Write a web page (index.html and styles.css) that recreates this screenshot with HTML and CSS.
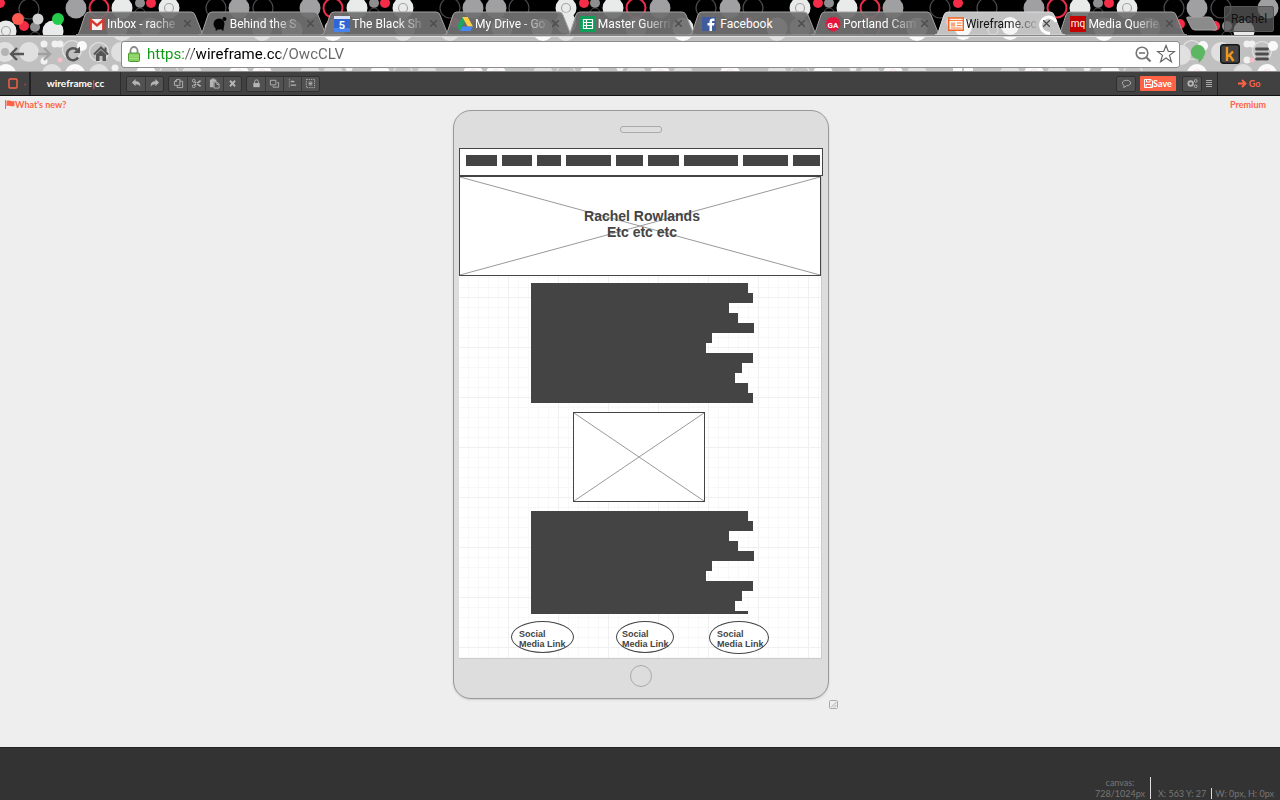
FILE: index.html
```html
<!DOCTYPE html>
<html lang="en">
<head>
<meta charset="utf-8">
<title>Wireframe.cc</title>
<link rel="stylesheet" href="styles.css">
</head>
<body>
<svg width="0" height="0" class="defs" aria-hidden="true">
  <defs>
    <circle id="c-gray" r="10.5" fill="#a0a0a2"/>
    <circle id="c-white" r="10.5" fill="#e9ebea"/>
    <circle id="c-dark" r="10" fill="none" stroke="#4c4c4c" stroke-width="1.2"/>
    <circle id="c-red" r="9.5" fill="none" stroke="#ef2d49" stroke-width="2"/>
    <circle id="c-dot" r="5" fill="#f42c48"/>
    <g id="c-ring"><circle r="10.5" fill="#e9ebea"/><circle r="4.5" fill="none" stroke="#a5a5a5" stroke-width="1.2"/></g>
    <g id="c-pair"><circle cy="-5" r="5" fill="#8e8e90"/><circle cy="5" r="5" fill="none" stroke="#4c4c4c"/></g>
    <circle id="t-light" r="10" fill="#e0e0e0"/>
    <circle id="t-white" r="10" fill="#fafafa"/>
    <circle id="t-line" r="9.5" fill="none" stroke="#e2e2e2" stroke-width="1.2"/>
    <circle id="t-small" r="3.5" fill="#f1f1f1"/>
    <g id="t-ring"><circle r="10" fill="#fafafa"/><circle r="4.5" fill="none" stroke="#f6dfe3"/></g>
    <path id="tab" d="M0 24 C3 24 3 21 4 19 L9 4 Q10 1 13 1 H115 Q118 1 119 4 L125 19 C126 22 127 24 130 24 Z"/>
    <path id="x" d="M0 0 7 7M7 0 0 7" stroke="#4b4b4b" stroke-width="1.3" fill="none"/>
  </defs>
</svg>

<header class="browser">
  <div class="tabstrip">
    <svg class="theme" height="36" aria-hidden="true">
      <use href="#c-dot" x="0" y="3"/><use href="#c-dark" x="29" y="9"/><use href="#c-gray" x="76" y="8"/><use href="#c-red" x="99" y="8"/><use href="#c-white" x="122" y="8"/><use href="#c-pair" x="140" y="8"/><use href="#c-dot" x="151" y="3"/><use href="#c-ring" x="169" y="8"/>
      <use href="#c-dark" x="216" y="8"/><use href="#c-gray" x="239" y="8"/><use href="#c-dark" x="263" y="8"/><use href="#c-gray" x="310" y="8"/><use href="#c-red" x="333" y="8"/><use href="#c-white" x="357" y="8"/><use href="#c-pair" x="374" y="8"/><use href="#c-dot" x="385" y="3"/><use href="#c-ring" x="403" y="8"/>
      <use href="#c-dark" x="450" y="8"/><use href="#c-gray" x="473" y="8"/><use href="#c-gray" x="496" y="8"/><use href="#c-dark" x="519" y="8"/><use href="#c-ring" x="566" y="8"/><use href="#c-dot" x="584" y="3"/><use href="#c-pair" x="595" y="8"/><use href="#c-white" x="613" y="8"/><use href="#c-red" x="636" y="8"/><use href="#c-gray" x="660" y="8"/>
      <use href="#c-dark" x="706" y="8"/><use href="#c-gray" x="730" y="8"/><use href="#c-dark" x="753" y="8"/><use href="#c-ring" x="800" y="8"/><use href="#c-dot" x="818" y="3"/><use href="#c-pair" x="829" y="8"/><use href="#c-white" x="847" y="8"/><use href="#c-red" x="870" y="8"/><use href="#c-gray" x="893" y="8"/>
      <use href="#c-dark" x="940" y="8"/><use href="#c-dot" x="958" y="3"/><use href="#c-dark" x="987" y="8"/><use href="#c-gray" x="1034" y="8"/><use href="#c-red" x="1057" y="8"/><use href="#c-white" x="1080" y="8"/><use href="#c-pair" x="1098" y="8"/><use href="#c-dot" x="1109" y="3"/><use href="#c-ring" x="1127" y="8"/>
      <use href="#c-dark" x="1174" y="8"/><use href="#c-gray" x="1197" y="8"/><use href="#c-dark" x="1221" y="8"/><use href="#c-gray" x="1268" y="8"/>
      <use href="#c-ring" x="6" y="31"/><use href="#c-white" x="53" y="31"/><use href="#c-pair" x="35" y="32"/><use href="#c-dot" x="24" y="26"/>
      <use href="#c-white" x="117" y="29"/><use href="#c-gray" x="150" y="28"/><use href="#c-gray" x="262" y="28"/><use href="#c-ring" x="292" y="30"/><use href="#c-white" x="335" y="29"/><use href="#c-gray" x="405" y="28"/><use href="#c-dot" x="455" y="23"/><use href="#c-ring" x="502" y="28"/><use href="#c-white" x="542" y="29"/><use href="#c-white" x="566" y="23"/><use href="#c-gray" x="636" y="28"/><use href="#c-white" x="683" y="28"/><use href="#c-dot" x="748" y="22"/><use href="#c-white" x="777" y="28"/><use href="#c-gray" x="800" y="28"/><use href="#c-red" x="870" y="28"/><use href="#c-white" x="917" y="28"/><use href="#c-white" x="1104" y="28"/><use href="#c-gray" x="1150" y="28"/>
      <use href="#c-dot" x="1180" y="24"/><use href="#c-dot" x="1215" y="26"/><use href="#c-pair" x="1227" y="31"/><use href="#c-white" x="1244" y="31"/>
      <circle cx="18" cy="19" r="6" fill="#ff5a50"/><circle cx="38" cy="19" r="5.5" fill="#d2d2d2"/><circle cx="58" cy="19" r="6" fill="#25cb4b"/>
    </svg>
    <nav class="tabs">
      <div class="tab"><svg class="tab-bg" width="130" height="24"><use href="#tab"/></svg>
        <svg class="fav" width="16" height="16" viewBox="0 0 16 16"><path d="M1 3h14v11H1z" fill="#f3f3f3"/><path d="M1.700 14V4L8 9.500 14.300 4V14" fill="none" stroke="#d93a30" stroke-width="2.400"/></svg>
        <a href="#">Inbox - rache</a><button aria-label="Close"><svg width="7" height="7"><use href="#x"/></svg></button></div>
      <div class="tab"><svg class="tab-bg" width="130" height="24"><use href="#tab"/></svg>
        <svg class="fav" width="16" height="16" viewBox="0 0 16 16"><circle cx="7" cy="8" r="5.500" fill="#050505"/><circle cx="12.500" cy="3" r="2" fill="#050505"/><path d="M4 10 3.500 14.500h1.500l1-2h3l1 2h1.500l.5-5z" fill="#050505"/></svg>
        <a href="#">Behind the S</a><button aria-label="Close"><svg width="7" height="7"><use href="#x"/></svg></button></div>
      <div class="tab"><svg class="tab-bg" width="130" height="24"><use href="#tab"/></svg>
        <svg class="fav" width="16" height="16" viewBox="0 0 16 16"><path d="M0 1h16v15H0z" fill="#2f66d5"/><path d="M0 0h16v3H0z" fill="#d7e2f8"/><path d="M0 12h16v4H0z" fill="#4783ed"/><text x="8" y="12.500" text-anchor="middle" class="fav-five">5</text></svg>
        <a href="#">The Black Sh</a><button aria-label="Close"><svg width="7" height="7"><use href="#x"/></svg></button></div>
      <div class="tab"><svg class="tab-bg" width="130" height="24"><use href="#tab"/></svg>
        <svg class="fav" width="16" height="16" viewBox="0 0 16 16"><path d="M5.300 1 0 10.500 2.800 15 8 5.500z" fill="#1ba462"/><path d="M5.300 1h5.400L16 10.500h-5.300z" fill="#ffcf43"/><path d="M2.800 15 5.500 10.500H16L13.300 15z" fill="#4688f4"/></svg>
        <a href="#">My Drive - Go</a><button aria-label="Close"><svg width="7" height="7"><use href="#x"/></svg></button></div>
      <div class="tab"><svg class="tab-bg" width="130" height="24"><use href="#tab"/></svg>
        <svg class="fav" width="16" height="16" viewBox="0 0 16 16"><rect width="16" height="16" rx="1" fill="#109d58"/><path d="M3.500 3.500h9v9h-9zM3.500 6.500h9M3.500 9.500h9M6.500 3.500v9" fill="none" stroke="#fff" stroke-width="1.200"/></svg>
        <a href="#">Master Guerri</a><button aria-label="Close"><svg width="7" height="7"><use href="#x"/></svg></button></div>
      <div class="tab"><svg class="tab-bg" width="130" height="24"><use href="#tab"/></svg>
        <svg class="fav" width="16" height="16" viewBox="0 0 16 16"><path d="M0 1h14v14H0z" fill="#3f5c9f"/><path d="M7.500 15V9.500H5.500V7h2V5.500C7.500 3.500 8.700 2.500 10.500 2.500h2V5H11c-.8 0-1 .3-1 1v1h2.500L12 9.500h-2V15z" fill="#fff"/></svg>
        <a href="#" class="full">Facebook</a><button aria-label="Close"><svg width="7" height="7"><use href="#x"/></svg></button></div>
      <div class="tab"><svg class="tab-bg" width="130" height="24"><use href="#tab"/></svg>
        <svg class="fav" width="16" height="16" viewBox="0 0 16 16"><circle cx="8" cy="8" r="6.500" fill="#e8123c" stroke="#e8123c" stroke-width="2" stroke-dasharray="1.500 1"/><text x="8" y="11.500" text-anchor="middle" class="fav-ga">GA</text></svg>
        <a href="#">Portland Cam</a><button aria-label="Close"><svg width="7" height="7"><use href="#x"/></svg></button></div>
      <div class="tab active"><svg class="tab-bg" width="130" height="24"><use href="#tab"/><circle cx="28" cy="16" r="9" fill="#f8f8f8" stroke="none"/><circle cx="16" cy="11" r="5" fill="#f5c6cd" stroke="none"/><circle cx="58" cy="19" r="5" fill="none" stroke="#e0e0e0"/><circle cx="75" cy="15" r="9" fill="#f5f5f5" stroke="none"/><path d="M115 22A8 8 0 1 1 121 11" fill="none" stroke="#fff" stroke-width="3"/></svg>
        <svg class="fav" width="16" height="16" viewBox="0 0 16 16"><path d="M.7 2h14.600v12.300H.7z" fill="#fff3ea" stroke="#f26322" stroke-width="1.400"/><path d="M1 4.500h14M9 7h4.500M9 9.500h4.500M3 12h10.500" stroke="#f26322" stroke-width=".8"/><path d="M3 6.500h4v4H3z" fill="#f8a67c"/></svg>
        <a href="#">Wireframe.cc</a><button aria-label="Close"><svg width="7" height="7"><use href="#x"/></svg></button></div>
      <div class="tab"><svg class="tab-bg" width="130" height="24"><use href="#tab"/></svg>
        <svg class="fav" width="16" height="16" viewBox="0 0 16 16"><path d="M0 0h16v16H0z" fill="#c40000"/><text x="8" y="11" text-anchor="middle" class="fav-mq">mq</text></svg>
        <a href="#">Media Querie</a><button aria-label="Close"><svg width="7" height="7"><use href="#x"/></svg></button></div>
    </nav>
    <button class="new-tab" aria-label="New tab"><svg width="32" height="16"><path d="M2 1H23Q26 1 27 4L31 12Q31 14 29 14H9Q6 14 5 11L1 3Q0 1 2 1Z" fill="#8b8b8b" stroke="#a5a5a5"/></svg></button>
    <button class="user">Rachel</button>
  </div>

  <div class="navbar">
    <svg class="theme" height="36" aria-hidden="true">
      <use href="#t-light" x="5" y="15"/><circle cx="5" cy="15" r="4" fill="#b4b4b4"/><use href="#t-light" x="29" y="15"/><use href="#t-small" x="44" y="7"/><use href="#t-small" x="55" y="7"/><use href="#t-small" x="60" y="7"/><use href="#t-small" x="44" y="24"/><circle cx="60" cy="23" r="2.500" fill="#f7bfc9"/><use href="#t-line" x="72" y="13"/><circle cx="82" cy="9" r="5" fill="#fafafa"/><use href="#t-line" x="99" y="15"/><use href="#t-light" x="121" y="15"/>
      <use href="#t-white" x="6" y="37"/><use href="#t-light" x="52" y="37"/><use href="#t-ring" x="75" y="37"/><use href="#t-light" x="99" y="37"/><use href="#t-small" x="115" y="31"/><use href="#t-white" x="146" y="37"/><use href="#t-line" x="169" y="37"/><use href="#t-light" x="192" y="37"/><use href="#t-ring" x="239" y="37"/><use href="#t-ring" x="262" y="37"/><use href="#t-light" x="310" y="37"/>
      <use href="#t-light" x="333" y="37"/><use href="#t-small" x="349" y="31"/><use href="#t-white" x="380" y="37"/><use href="#t-line" x="403" y="37"/><use href="#t-light" x="427" y="37"/><use href="#t-ring" x="473" y="37"/><use href="#t-ring" x="496" y="37"/><use href="#t-light" x="543" y="37"/><use href="#t-line" x="566" y="37"/><use href="#t-white" x="590" y="37"/><use href="#t-small" x="620" y="31"/><use href="#t-light" x="636" y="37"/><use href="#t-ring" x="660" y="37"/><use href="#t-light" x="683" y="37"/><use href="#t-ring" x="730" y="37"/><use href="#t-light" x="777" y="37"/><use href="#t-line" x="800" y="37"/><use href="#t-white" x="823" y="37"/><use href="#t-small" x="853" y="31"/><use href="#t-light" x="870" y="37"/><use href="#t-ring" x="893" y="37"/><use href="#t-light" x="917" y="37"/><path d="M953 30h9v6h-9zm11 0h9v6h-9z" fill="#fafafa"/><use href="#t-light" x="1010" y="37"/><use href="#t-ring" x="1034" y="37"/><use href="#t-light" x="1057" y="37"/><use href="#t-small" x="1087" y="31"/><use href="#t-white" x="1110" y="37"/><use href="#t-line" x="1133" y="37"/><use href="#t-ring" x="1197" y="37"/><use href="#t-light" x="1243" y="37"/><use href="#t-ring" x="1267" y="37"/>
      <use href="#t-light" x="122" y="-6"/><use href="#t-light" x="262" y="-6"/><use href="#t-white" x="333" y="-6"/><use href="#t-light" x="403" y="-6"/><use href="#t-light" x="450" y="-6"/><use href="#t-white" x="543" y="-6"/><use href="#t-light" x="566" y="-6"/><use href="#t-white" x="683" y="-6"/><use href="#t-light" x="777" y="-6"/><use href="#t-white" x="917" y="-6"/><use href="#t-white" x="963" y="-7"/><use href="#t-white" x="1010" y="-7"/><use href="#t-white" x="1104" y="-6"/>
      <use href="#t-light" x="1181" y="18"/><use href="#t-line" x="1192" y="13"/><circle cx="1203" cy="9" r="5" fill="#fafafa"/><use href="#t-light" x="1221" y="15"/><use href="#t-small" x="1247" y="7"/><use href="#t-small" x="1252" y="7"/><use href="#t-small" x="1247" y="23"/><circle cx="1252" cy="23" r="2.500" fill="#f7bfc9"/><use href="#t-line" x="1262" y="14"/><circle cx="1273" cy="9" r="5" fill="#fafafa"/>
    </svg>
    <button aria-label="Back"><svg width="18" height="18" viewBox="0 0 18 18"><path d="M9 3 3 9l6 6M3 9h13" fill="none" stroke="#555" stroke-width="2.400"/></svg></button>
    <button aria-label="Forward"><svg width="18" height="18" viewBox="0 0 18 18"><path d="M8 3 14 9l-6 6M14 9H2" fill="none" stroke="#a0a0a0" stroke-width="2.400"/></svg></button>
    <button aria-label="Reload"><svg width="18" height="18" viewBox="0 0 18 18"><path d="M14 12.500A6 6 0 1 1 13.200 5" fill="none" stroke="#555" stroke-width="2.600"/><path d="M16 1.500V8H9.500z" fill="#555"/></svg></button>
    <button aria-label="Home"><svg width="18" height="18" viewBox="0 0 18 18"><path d="M2 9.500 9 2.500l7 7M13.500 2.500V7" fill="none" stroke="#555" stroke-width="2"/><path d="M4 9.500 9 5l5 4.500V16h-3.500v-5h-3v5H4z" fill="#555"/></svg></button>
    <div class="address">
      <svg width="12" height="16" viewBox="0 0 12 16"><path d="M2.500 8V4.500a3.500 3.500 0 0 1 7 0V8" fill="none" stroke="#8b8b8b" stroke-width="1.800"/><rect x=".5" y="7" width="11" height="8.500" rx="1" fill="#85cf5c" stroke="#4c9b32"/><path d="M1 10h10M1 12.500h10" stroke="#a6e184"/></svg>
      <input type="text" aria-label="Address" value="https://wireframe.cc/OwcCLV">
      <button aria-label="Zoom"><svg width="18" height="18" viewBox="0 0 18 18"><circle cx="8" cy="8" r="5.800" fill="none" stroke="#747474" stroke-width="1.600"/><path d="M5 8h6" stroke="#747474" stroke-width="1.600"/><path d="m12.500 12.500 4 4" stroke="#747474" stroke-width="2.200"/></svg></button>
      <button aria-label="Bookmark"><svg width="20" height="20" viewBox="0 0 20 20"><path d="m10 1.500 2.300 6h6.200l-5 3.900 1.900 6.300L10 14l-5.400 3.700 1.900-6.300-5-3.900h6.200z" fill="#fff" stroke="#666" stroke-width="1.200"/></svg></button>
    </div>
    <button class="ext" aria-label="Hangouts"><svg width="16" height="20" viewBox="0 0 16 20"><circle cx="8" cy="8" r="7.200" fill="#5db662"/><path d="M8 13h6l-5 6z" fill="#5db662"/></svg></button>
    <button class="ext" aria-label="Keyword"><svg width="20" height="20" viewBox="0 0 20 20"><rect x=".7" y=".7" width="18.600" height="18.600" rx="2.500" fill="#444" stroke="#161616" stroke-width="1.400"/><path d="M7 3v14M13 7.500 8 12.500M9.500 11l4 6" fill="none" stroke="#f2951d" stroke-width="2.400"/></svg></button>
    <button class="ext" aria-label="Menu"><svg width="14" height="14" viewBox="0 0 14 14"><path d="M1.500 2h11M1.500 7h11M1.500 12h11" stroke="#4c4c4c" stroke-width="2.800" stroke-linecap="round"/></svg></button>
  </div>
</header>

<div class="toolbar">
  <button class="device" aria-label="Device"><svg width="20" height="12" viewBox="0 0 20 12"><rect x="1" y="1" width="8" height="9" rx="1" fill="none" stroke="#ff6347" stroke-width="1.400"/><path d="m16.500 5 2 1.500-2 1.500z" fill="#a34a3b"/></svg></button>
  <a class="logo" href="#">wireframe<i>|</i>cc</a>
  <div class="group">
    <button aria-label="Undo"><svg viewBox="0 0 12 12"><path d="M5 1v2.500c3.500 0 5.500 1.500 5 6C9 7.500 7.500 6.800 5 6.800V9L1 5z"/></svg></button><button aria-label="Redo"><svg viewBox="0 0 12 12"><path d="M7 1v2.500C3.500 3.500 1.500 5 2 9.500 3 7.500 4.500 6.800 7 6.800V9l4-4z"/></svg></button>
  </div>
  <div class="group">
    <button aria-label="Copy"><svg viewBox="0 0 12 12"><path class="ln" d="M4 1.500h3.500V8h-6V4zM7.500 3.500h3v7h-6V8M4 1.500V4H1.500"/></svg></button><button aria-label="Cut"><svg viewBox="0 0 12 12"><circle class="ln" cx="3" cy="3" r="1.500"/><circle class="ln" cx="3" cy="9" r="1.500"/><path d="m4 3.500 7.500 5.300-2 .7L3.500 5zM4 8.500l7.500-5.300-2-.7L3.500 7z"/></svg></button><button aria-label="Paste"><svg viewBox="0 0 12 12"><path d="M1 1.500h2V.5h3v1h2V4H5v6H1z"/><path class="ln" d="M5.500 4.500H9l2 2V11H5.500zM8.500 4.500V7H11"/></svg></button><button aria-label="Delete"><svg viewBox="0 0 12 12"><path d="M2.500 3.800 4 2.300l2 2 2-2 1.500 1.500-2 2.200 2 2.200L8 9.700l-2-2-2 2-1.500-1.500 2-2.200z"/></svg></button>
  </div>
  <div class="group">
    <button aria-label="Lock"><svg viewBox="0 0 12 12"><path d="M2.500 5.500h7V10h-7z"/><path class="ln" d="M4 6V4a2 2 0 0 1 4 0v2"/></svg></button><button aria-label="Arrange"><svg viewBox="0 0 12 12"><path class="ln" d="M1.500 2.500h6v5h-6zM9 5h1.500v5h-6V8.500"/></svg></button><button aria-label="Align"><svg viewBox="0 0 12 12"><path class="ln" d="M2.500 1v10" stroke-dasharray="1 1"/><path d="M4 3h4v1.500H4zm0 4h6v1.500H4z"/></svg></button><button aria-label="Select all"><svg viewBox="0 0 12 12"><path class="ln" d="M1.500 1.500h9v9h-9z" stroke-dasharray="1.500 1"/><path class="ln" d="M4 4.500h4M4 6h4M4 7.500h4"/></svg></button>
  </div>
  <div class="right">
    <div class="group"><button aria-label="Comments"><svg viewBox="0 0 12 12"><path class="ln" d="M6 2.500c3 0 4.500 1.500 4.500 3S9 8.500 6 8.500L3 10.500l.3-2.500C2 7.300 1.500 6.500 1.500 5.500c0-1.500 1.500-3 4.500-3z"/></svg></button></div>
    <button class="save"><svg width="9" height="9" viewBox="0 0 9 9"><path d="M.5.5h6.500L8.500 2v6.500h-8zM2.500.5v2.500h3.500V.5M2 8.500v-3h5v3" fill="none" stroke="#fff"/></svg>Save</button>
    <div class="group"><button aria-label="Settings"><svg viewBox="0 0 12 12"><circle class="gear" cx="4" cy="6" r="2.500"/><circle class="gear sm" cx="9.500" cy="3.200" r="1.500"/><circle class="gear sm" cx="9.500" cy="9" r="1.500"/></svg></button></div>
    <button class="list" aria-label="List"><svg width="6" height="8" viewBox="0 0 6 8"><path d="M0 .5h6M0 2.500h6M0 4.500h6M0 6.500h6" stroke="#aaa"/></svg></button>
    <a class="go" href="#"><svg width="9" height="9" viewBox="0 0 9 9"><path d="M0 4.500h7M4 1l3.500 3.500L4 8" fill="none" stroke="#ff6347" stroke-width="1.800"/></svg>Go</a>
  </div>
</div>

<main>
  <div class="links"><a href="#"><svg width="10" height="9" viewBox="0 0 10 9"><path d="M.5 0v9" stroke="#ff6347"/><path d="M1.500 1C4-.3 6 2 9.500 1v5C6 7.200 4 5 1.500 6.200z" fill="#ff6347"/></svg>What's new?</a><a href="#" class="premium">Premium</a></div>
  <div class="tablet">
    <div class="speaker"></div>
    <div class="screen">
      <div class="menu"><i style="width:31px"></i><i style="width:30px"></i><i style="width:24px"></i><i style="width:45px"></i><i style="width:27px"></i><i style="width:31px"></i><i style="width:54px"></i><i style="width:45px"></i><i style="width:27px"></i></div>
      <div class="hero image">
        <svg viewBox="0 0 100 100" preserveAspectRatio="none"><path d="M0 0 100 100M100 0 0 100"/></svg>
        <h1>Rachel Rowlands<br>Etc etc etc</h1>
      </div>
      <div class="copy"><i style="width:217px"></i><i style="width:222px"></i><i style="width:198px"></i><i style="width:207px"></i><i style="width:223px"></i><i style="width:181px"></i><i style="width:175px"></i><i style="width:222px"></i><i style="width:211px"></i><i style="width:204px"></i><i style="width:217px"></i><i style="width:222px"></i></div>
      <div class="photo image"><svg viewBox="0 0 100 100" preserveAspectRatio="none"><path d="M0 0 100 100M100 0 0 100"/></svg></div>
      <div class="copy short"><i style="width:217px"></i><i style="width:222px"></i><i style="width:198px"></i><i style="width:207px"></i><i style="width:223px"></i><i style="width:181px"></i><i style="width:175px"></i><i style="width:222px"></i><i style="width:211px"></i><i style="width:204px"></i><i style="width:217px"></i></div>
      <div class="social"><div class="first">Social<br>Media Link</div><div class="second">Social<br>Media Link</div><div class="third">Social<br>Media Link</div></div>
    </div>
    <div class="home"></div>
    <svg class="resize" width="9" height="9" viewBox="0 0 9 9"><rect x=".5" y=".5" width="8" height="8" rx="1" fill="none" stroke="#aaa"/><path d="M2 7.500 7.500 2M5 7.500 7.500 5" stroke="#aaa"/></svg>
  </div>
</main>

<footer>
  <span class="size">canvas:<br>728/1024px</span><span class="pos">X: 563 Y: 27</span><span class="dim">W: 0px, H: 0px</span>
</footer>
</body>
</html>
```
FILE: styles.css
```css
* { box-sizing: border-box; }
body { margin: 0; min-height: 100vh; display: flex; flex-direction: column; background: #eee; font-family: Lato, sans-serif; }
button { border: 0; padding: 0; margin: 0; background: none; font: inherit; color: inherit; display: flex; align-items: center; justify-content: center; }
a { text-decoration: none; color: inherit; }
svg { display: block; flex: none; }
.defs { position: absolute; }
.browser { font-family: Roboto, sans-serif; }
.theme { position: absolute; left: 0; top: 0; width: 100%; }

.tabstrip { position: relative; height: 36px; background: #000; display: flex; align-items: flex-end; border-bottom: 1px solid #858585; overflow: hidden; }
.tabs { flex: 1; display: flex; padding-left: 76px; min-width: 0; }
.tab { position: relative; flex: 1; min-width: 0; height: 23px; display: flex; align-items: center; gap: 2px; padding: 0 4px 0 13px; color: #fff; font-size: 12px; }
.tab-bg { position: absolute; left: 0; top: -1px; fill: rgb(112 112 112 / 94%); stroke: #a2a2a2; overflow: visible; }
.tab.active { color: #111; z-index: 1; }
.active .tab-bg { fill: #c2c2c2; stroke: #ddd; }
.fav { position: relative; }
.tab a { position: relative; flex: 1; white-space: nowrap; mask-image: linear-gradient(90deg, #000 60%, transparent 105%); }
.tab a.full { mask-image: none; }
.tab button { position: relative; width: 14px; }
.fav-five { font: bold 11px Roboto, sans-serif; fill: #fff; }
.fav-ga { font: bold 8px Roboto, sans-serif; fill: #fff; }
.fav-mq { font: 10px Roboto, sans-serif; fill: #fff; }
.new-tab { position: relative; width: 32px; margin: 0 6px 3px 6px; }
.user { position: relative; width: 50px; height: 26px; margin: 0 6px 3px 0; border: 1px solid #555; border-radius: 2px; background: rgb(90 90 90 / 75%); color: #111; font: 12px Roboto, sans-serif; }

.navbar { position: relative; height: 36px; background: #c0c0c0; border-top: 1px solid #ddd; border-bottom: 1px solid #888; display: flex; align-items: center; padding: 0 2px 0 8px; overflow: hidden; }
.navbar > button { position: relative; width: 28px; }
.navbar > button:first-of-type { margin-left: -5px; }
.address { position: relative; flex: 1; height: 27px; display: flex; align-items: center; gap: 4px; padding: 0 3px 0 6px; margin: 0 2px 0 6px; border: 1px solid #8b8b8b; border-radius: 3px; background: #fff; }
.address input { flex: 1; min-width: 0; border: 0; outline: 0; padding: 0; margin-left: 3px; font: 15px/20px Roboto, sans-serif; color: transparent; background: linear-gradient(90deg, #0b9a10 0 36px, #666 36px 47px, #000 47px 133px, #666 133px); -webkit-background-clip: text; background-clip: text; }
.navbar > .ext { width: 32px; }

.toolbar { height: 24px; display: flex; align-items: center; background: #414141; border-bottom: 1px solid #111; color: #ff6347; }
.device { width: 31px; height: 23px; padding-left: 6px; border-right: 2px solid #222; }
.logo { width: 90px; line-height: 23px; text-align: center; color: #fff; font-size: 10px; font-weight: 700; border-right: 1px solid #2b2b2b; margin-right: 5px; }
.logo i { font-style: normal; font-weight: 400; color: #ff6347; }
.group { display: flex; margin-right: 4px; border: 1px solid #303030; border-radius: 2px; background: #515151; }
.group button { width: 18px; height: 14px; }
.group button + button { border-left: 1px solid #3a3a3a; }
.group svg { width: 11px; height: 11px; fill: #b5b5b5; }
.group .ln { fill: none; stroke: #b5b5b5; }
.group .gear { fill: none; stroke: #b5b5b5; stroke-width: 2; }
.group .sm { stroke-width: 1; }
.right { margin-left: auto; display: flex; align-items: center; }
.save { width: 36px; height: 15px; margin-right: 6px; border-radius: 1px; background: #ff6347; color: #fff; font-size: 9px; font-weight: 700; }
.list { width: 6px; margin-right: 5px; }
.go { display: flex; align-items: center; justify-content: center; gap: 2px; width: 63px; height: 23px; border-left: 1px solid #222; font-size: 9px; font-weight: 700; }

main { flex: 1; padding-bottom: 48px; }
.links { display: flex; justify-content: space-between; height: 14px; padding: 2px 14px 0 5px; color: #ff6347; font-size: 9px; line-height: 13px; font-weight: 700; }
.links a { display: flex; align-items: center; }
.tablet { position: relative; width: 376px; margin: 0 auto; left: 1px; padding: 15px 5px 11px; background: #ddd; border: 1px solid #999; border-radius: 18px; box-shadow: 0 1px 2px #ccc; }
.speaker { width: 42px; height: 7px; margin: 0 auto 15px; border: 1px solid #aaa; border-radius: 3px; }
.screen { display: flex; flex-direction: column; width: 363px; height: 511px; border-right: 1px solid #ccc; border-bottom: 1px solid #ccc; background-color: #fff;
  background-image: linear-gradient(90deg, transparent 49px, #f0f0f0 49px), linear-gradient(transparent 49px, #f0f0f0 49px), linear-gradient(90deg, transparent 9px, #f8f8f8 9px), linear-gradient(transparent 9px, #f8f8f8 9px);
  background-size: 50px 50px, 50px 50px, 10px 10px, 10px 10px; }
.menu { display: flex; gap: 5px; width: 364px; height: 28px; padding: 6px; border: 1px solid #444; background: #fff; }
.menu i { flex: none; height: 11px; background: #444; }
.image { position: relative; border: 1px solid #444; background: #fff; }
.image svg { width: 100%; height: 100%; }
.image path { fill: none; stroke: #999; vector-effect: non-scaling-stroke; }
.hero { height: 100px; display: grid; }
.hero > * { grid-area: 1 / 1; min-height: 0; }
.hero h1 { position: relative; margin: 0; padding: 0 0 4px 4px; place-self: center; text-align: center; color: #444; font: bold 14px/16px "Liberation Sans", Arial, sans-serif; }
.copy { margin: 7px 0 9px 72px; }
.copy i { display: block; height: 10px; background: #444; }
.copy.short { margin-bottom: 7px; }
.short i:last-child { height: 3px; }
.photo { width: 132px; height: 90px; margin-left: 114px; }
.photo + .copy { margin-top: 9px; }
.social { display: flex; align-items: flex-start; padding-left: 52px; color: #444; font: bold 9px/10px "Liberation Sans", Arial, sans-serif; white-space: nowrap; }
.social div { height: 32px; padding: 7px 0 0 7px; border: 1px solid #444; border-radius: 50%; background: #fff; }
.social .first { width: 63px; margin-right: 42px; }
.social .second { width: 58px; margin-right: 35px; padding-left: 5px; }
.social .third { width: 60px; height: 33px; }
.home { width: 22px; height: 22px; margin: 6px auto 0; border: 1px solid #aaa; border-radius: 50%; }
.resize { position: absolute; right: -10px; bottom: -11px; }

footer { height: 53px; display: flex; justify-content: flex-end; align-items: flex-end; padding: 0 6px 1px; background: #333; border-top: 1px solid #222; color: #777; font-size: 9px; line-height: 11px; }
.size { padding-right: 5px; text-align: center; border-right: 1px solid #ddd; }
.pos { padding: 0 5px 0 7px; }
.dim { padding-left: 3px; border-left: 1px solid #ddd; }
```
